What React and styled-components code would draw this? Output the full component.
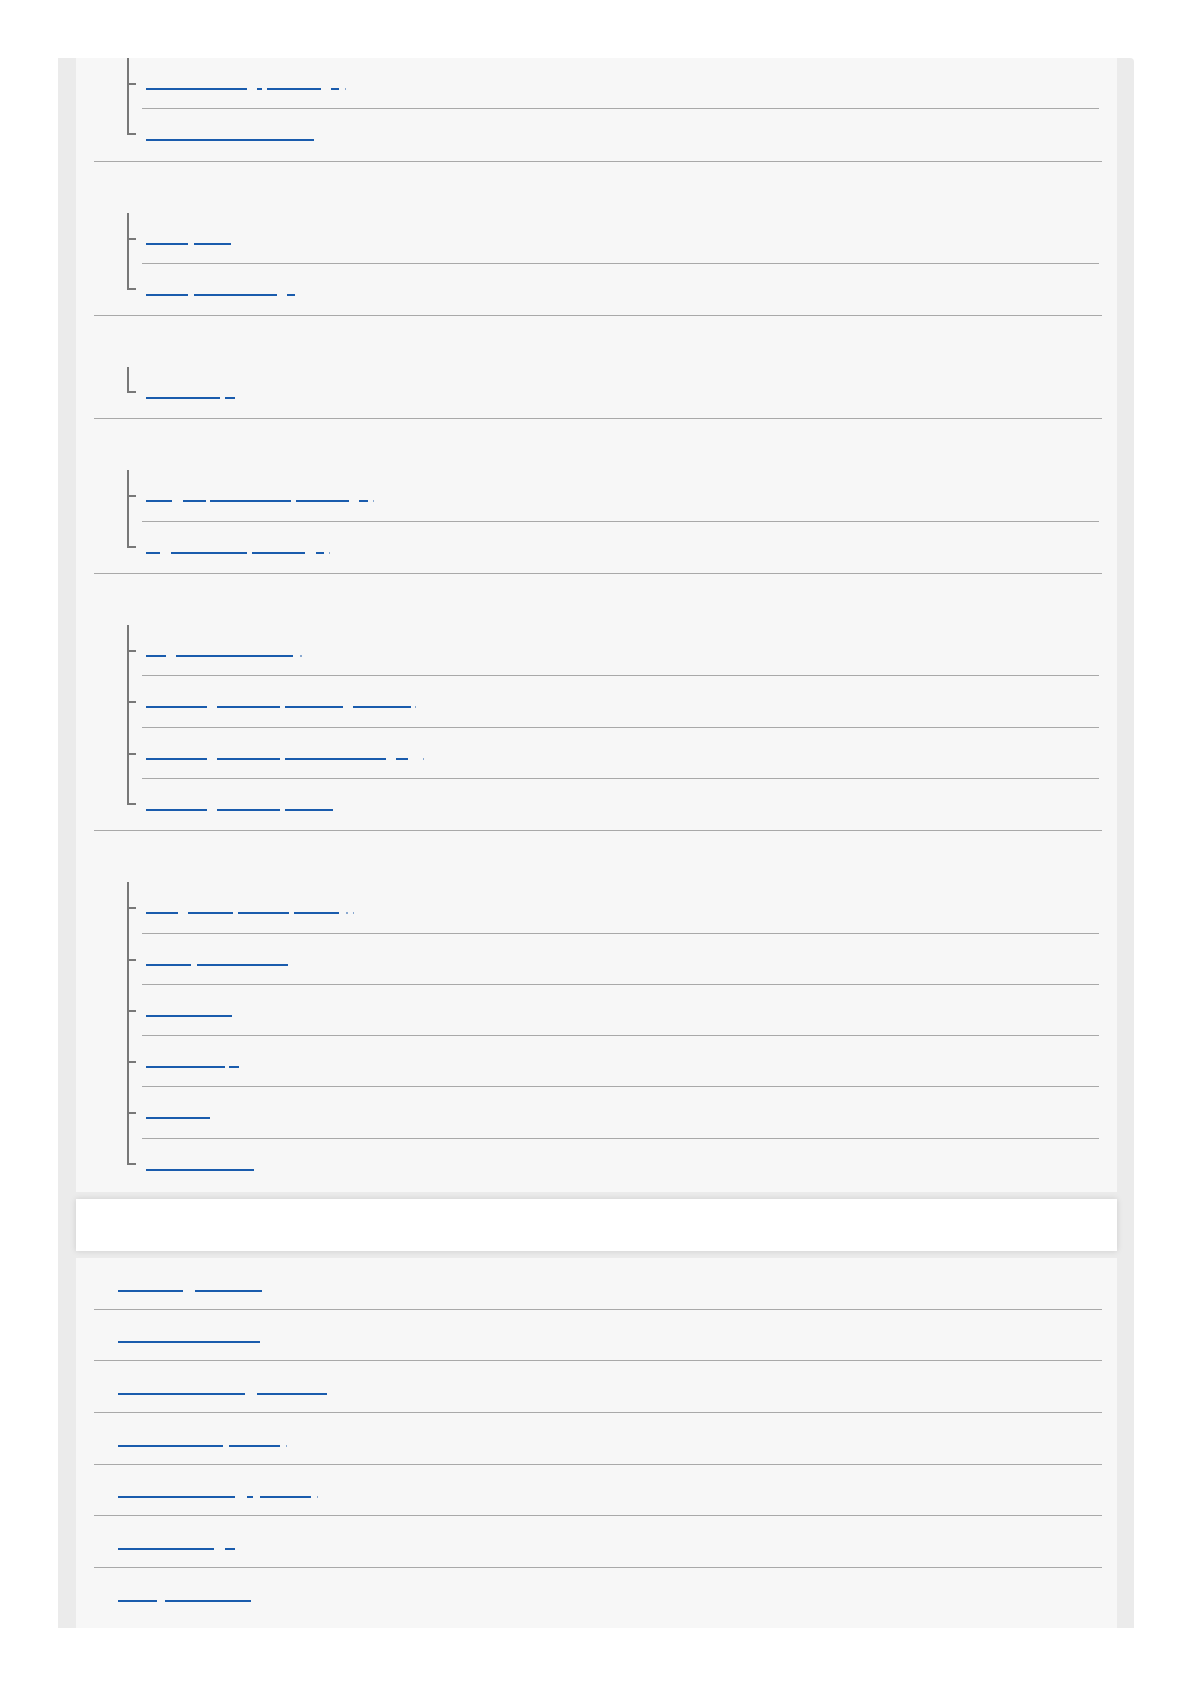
import React from 'react'
import styled, { createGlobalStyle } from 'styled-components'

// underline segments of each link, [start, end] in px from the link's left edge
const tree = [
  {
    cut: true,
    items: [
      [[0, 101], [111, 116], [121, 175], [185, 193], [199, 200]],
      [[0, 168]],
    ],
  },
  {
    items: [
      [[0, 42], [48, 85]],
      [[0, 42], [48, 131], [141, 149]],
    ],
  },
  {
    items: [[[0, 74], [79, 89]]],
  },
  {
    items: [
      [[0, 26], [37, 60], [64, 145], [150, 203], [213, 222], [227, 228]],
      [[0, 14], [25, 101], [106, 159], [170, 178], [183, 184]],
    ],
  },
  {
    items: [
      [[0, 20], [30, 147], [154, 156]],
      [[0, 61], [71, 134], [139, 197], [207, 265], [269, 270]],
      [[0, 61], [71, 134], [139, 240], [250, 262], [277, 278]],
      [[0, 61], [71, 134], [139, 187]],
    ],
  },
  {
    last: true,
    items: [
      [[0, 32], [42, 87], [92, 143], [148, 193], [200, 202], [207, 208]],
      [[0, 45], [51, 142]],
      [[0, 86]],
      [[0, 79], [83, 93]],
      [[0, 64]],
      [[0, 108]],
    ],
  },
]

const bottomLinks = [
  [[0, 65], [77, 144]],
  [[0, 142]],
  [[0, 127], [139, 209]],
  [[0, 105], [111, 162], [168, 169]],
  [[0, 117], [129, 135], [142, 193], [199, 200]],
  [[0, 96], [107, 117]],
  [[0, 39], [47, 133]],
]

const LinkLine = ({ segs }) => {
  let prev = 0
  return (
    <Link href="#">
      {segs.map(([a, b], i) => {
        const gap = a - prev
        prev = b
        return <Seg key={i} $gap={gap} $w={b - a} $dot={b - a <= 2} />
      })}
    </Link>
  )
}

export default function App() {
  return (
    <>
      <GlobalStyle />
      <Frame>
        <TreePanel>
          {tree.map((sec, si) => (
            <Section key={si} $last={sec.last}>
              {!sec.cut && <SectionHead />}
              <List>
                {sec.items.map((segs, ii) => (
                  <TreeItem key={ii} $last={ii === sec.items.length - 1}>
                    <LinkLine segs={segs} />
                  </TreeItem>
                ))}
              </List>
            </Section>
          ))}
        </TreePanel>
        <Band />
        <BottomPanel>
          {bottomLinks.map((segs, i) => (
            <FlatItem key={i} $last={i === bottomLinks.length - 1}>
              <LinkLine segs={segs} />
            </FlatItem>
          ))}
        </BottomPanel>
      </Frame>
    </>
  )
}

const GlobalStyle = createGlobalStyle`
  html, body {
    margin: 0;
    background: #ffffff;
    font-family: "Liberation Sans", Arial, sans-serif;
  }
  ul {
    margin: 0;
    padding: 0;
    list-style: none;
  }
`

const Frame = styled.div`
  box-sizing: border-box;
  width: 1076px;
  margin: 58px 0 0 58px;
  padding: 0 17px 0 18px;
  background: #ebebeb;
  border-top-right-radius: 4px;
`

const TreePanel = styled.div`
  background: #f7f7f7;
  padding: 0 15px 2px 18px;
`

const Section = styled.div`
  border-bottom: ${p => (p.$last ? 'none' : '1px solid #a9a9a9')};
`

const SectionHead = styled.div`
  height: 51px;
`

const List = styled.ul`
  margin: 0 3px 0 48px !important;
`

const TreeItem = styled.li`
  position: relative;
  box-sizing: border-box;
  height: 51.3px;
  padding: 30px 0 0 4px;
  border-bottom: ${p => (p.$last ? 'none' : '1px solid #a9a9a9')};

  &::before {
    content: '';
    position: absolute;
    left: -15px;
    top: 0;
    width: 2px;
    height: ${p => (p.$last ? '26px' : 'calc(100% + 1px)')};
    background: #787878;
  }

  &::after {
    content: '';
    position: absolute;
    left: -15px;
    top: ${p => (p.$last ? '24px' : '25px')};
    width: 9px;
    height: 2px;
    background: #787878;
  }
`

const Link = styled.a`
  display: flex;
  align-items: flex-start;
  height: 2px;
  text-decoration: none;
`

const Seg = styled.span`
  display: block;
  flex: none;
  margin-left: ${p => p.$gap}px;
  width: ${p => p.$w}px;
  height: 2px;
  background: ${p => (p.$dot ? '#8aa9d0' : '#1a5cad')};
`

const Band = styled.div`
  height: 52px;
  margin: 7px 0;
  background: #ffffff;
  box-shadow: 0 0 6px rgba(0, 0, 0, 0.13);
`

const BottomPanel = styled.div`
  background: #f7f7f7;
  padding: 0 15px 8px 18px;
`

const FlatItem = styled.div`
  box-sizing: border-box;
  height: 51.7px;
  padding: 31.5px 0 0 24px;
  border-bottom: ${p => (p.$last ? 'none' : '1px solid #a9a9a9')};
`
